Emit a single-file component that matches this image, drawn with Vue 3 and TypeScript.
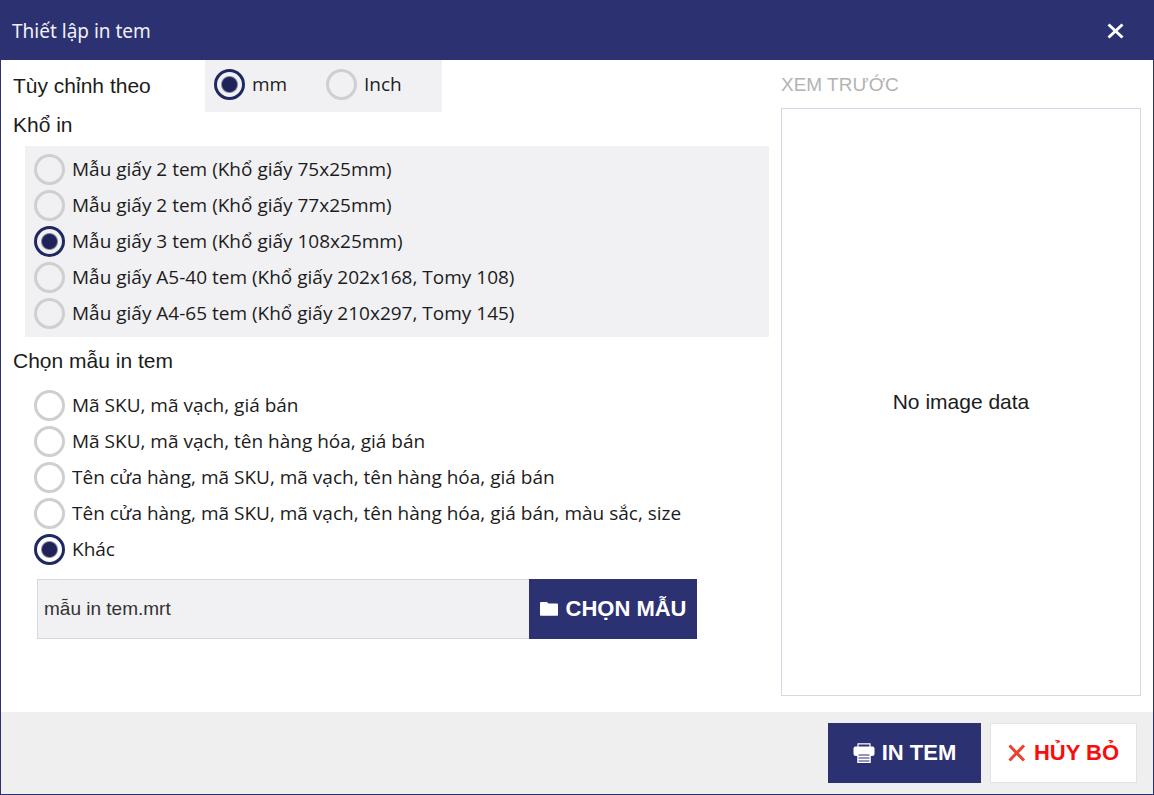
<script setup lang="ts">
import { computed, ref } from 'vue'

type Unit = 'mm' | 'inch'

interface Option {
  id: string
  label: string
}

const units: { id: Unit; label: string }[] = [
  { id: 'mm', label: 'mm' },
  { id: 'inch', label: 'Inch' },
]

const paperSizes: Option[] = [
  { id: 'p75', label: 'Mẫu giấy 2 tem (Khổ giấy 75x25mm)' },
  { id: 'p77', label: 'Mẫu giấy 2 tem (Khổ giấy 77x25mm)' },
  { id: 'p108', label: 'Mẫu giấy 3 tem (Khổ giấy 108x25mm)' },
  { id: 'a5', label: 'Mẫu giấy A5-40 tem (Khổ giấy 202x168, Tomy 108)' },
  { id: 'a4', label: 'Mẫu giấy A4-65 tem (Khổ giấy 210x297, Tomy 145)' },
]

const templates: Option[] = [
  { id: 'basic', label: 'Mã SKU, mã vạch, giá bán' },
  { id: 'name', label: 'Mã SKU, mã vạch, tên hàng hóa, giá bán' },
  { id: 'shop', label: 'Tên cửa hàng, mã SKU, mã vạch, tên hàng hóa, giá bán' },
  { id: 'full', label: 'Tên cửa hàng, mã SKU, mã vạch, tên hàng hóa, giá bán, màu sắc, size' },
  { id: 'other', label: 'Khác' },
]

const unit = ref<Unit>('mm')
const paper = ref('p108')
const template = ref('other')
const fileName = ref('mẫu in tem.mrt')
const canPickFile = computed(() => template.value === 'other')
</script>

<template>
  <div class="dialog" role="dialog" aria-labelledby="dialog-title">
    <header class="titlebar">
      <h1 id="dialog-title">Thiết lập in tem</h1>
      <button class="close" type="button" aria-label="Đóng">
        <svg viewBox="0 0 18 16" width="18" height="16" aria-hidden="true">
          <path d="M1.5 1.5 15.5 14.5M15.5 1.5 1.5 14.5" fill="none" stroke="#fff" stroke-width="3" />
        </svg>
      </button>
    </header>

    <main class="content">
      <form class="settings" @submit.prevent>
        <div class="unit-row">
          <span id="unit-label" class="heading">Tùy chỉnh theo</span>
          <div class="units" role="radiogroup" aria-labelledby="unit-label">
            <label v-for="u in units" :key="u.id" class="option">
              <input v-model="unit" type="radio" name="unit" :value="u.id" />
              <span>{{ u.label }}</span>
            </label>
          </div>
        </div>

        <h2 id="paper-label" class="heading">Khổ in</h2>
        <div class="group shaded" role="radiogroup" aria-labelledby="paper-label">
          <label v-for="p in paperSizes" :key="p.id" class="option">
            <input v-model="paper" type="radio" name="paper" :value="p.id" />
            <span>{{ p.label }}</span>
          </label>
        </div>

        <h2 id="template-label" class="heading template-heading">Chọn mẫu in tem</h2>
        <div class="group" role="radiogroup" aria-labelledby="template-label">
          <label v-for="t in templates" :key="t.id" class="option">
            <input v-model="template" type="radio" name="template" :value="t.id" />
            <span>{{ t.label }}</span>
          </label>
        </div>

        <div class="file-row">
          <input v-model="fileName" class="file" type="text" readonly aria-label="Tệp mẫu in" />
          <button class="btn primary pick" type="button" :disabled="!canPickFile">
            <svg viewBox="0 0 18 14" width="18" height="14" aria-hidden="true">
              <path d="M0 1Q0 0 1 0h6l1.5 1.5H17q1 0 1 1V13q0 .7-.7.7H.7Q0 13.700 0 13z" fill="#fff" />
            </svg>
            <span>CHỌN MẪU</span>
          </button>
        </div>
      </form>

      <section class="preview" aria-labelledby="preview-label">
        <h2 id="preview-label" class="heading muted">XEM TRƯỚC</h2>
        <div class="canvas">No image data</div>
      </section>
    </main>

    <footer class="actions">
      <button class="btn primary print" type="button">
        <svg viewBox="0 0 22 20" width="22" height="20" aria-hidden="true">
          <path d="M5 4V.8h12V4" fill="none" stroke="#fff" stroke-width="1.2" />
          <path d="M2.500 3.500h17q2 0 2 2v5q0 2.500-2.500 2.500H3Q.5 13 .5 10.500v-5q0-2 2-2z" fill="#fff" />
          <path d="M4.200 10.500h13.600V20H4.200z" fill="#fff" />
          <path d="M5.500 12h11M5.500 15h11M5.500 18h11" stroke="#2c3172" stroke-width="1" />
        </svg>
        <span>IN TEM</span>
      </button>
      <button class="btn cancel" type="button">
        <svg viewBox="0 0 18 18" width="18" height="18" aria-hidden="true">
          <path d="M1.500 1.500 16 16.500M16 1.500 1.500 16.500" fill="none" stroke="#e8432f" stroke-width="3" />
        </svg>
        <span>HỦY BỎ</span>
      </button>
    </footer>
  </div>
</template>

<style>
body {
  margin: 0;
}
</style>

<style scoped>
.dialog {
  --navy: #2c3172;
  --line: #d5d5e5;
  --shade: #f1f1f4;
  box-sizing: border-box;
  min-height: 100vh;
  display: flex;
  flex-direction: column;
  border: 1px solid var(--navy);
  background: #fff;
  color: #1c1c1c;
  font-family: "Liberation Sans", Arial, sans-serif;
  font-size: 21px;
}

.titlebar {
  display: flex;
  align-items: center;
  justify-content: space-between;
  height: 59px;
  padding: 0 28px 0 11px;
  background: var(--navy);
}

.titlebar h1 {
  margin: 0;
  color: #f0f0f6;
  font: 400 19px/28px "Noto Sans", "Open Sans", sans-serif;
}

.close {
  display: flex;
  padding: 0;
  border: 0;
  background: none;
}

.content {
  flex: 1;
  display: grid;
  grid-template-columns: minmax(0, 1fr) 360px;
  gap: 12px;
  padding: 0 12px 16px 12px;
}

.heading {
  margin: 0;
  font-size: 21px;
  font-weight: 400;
  line-height: 26px;
}

.unit-row {
  display: grid;
  grid-template-columns: 192px 237px;
  align-items: center;
}

.units {
  display: grid;
  grid-template-columns: 112px 1fr;
  box-sizing: border-box;
  height: 52px;
  padding: 6px 9px 10px;
  background: var(--shade);
}

.group {
  display: flex;
  flex-direction: column;
  margin-left: 12px;
  padding: 5px 9px 6px;
}

.unit-row + .heading {
  margin-bottom: 8px;
}

.shaded {
  background: var(--shade);
}

.template-heading {
  margin: 11px 0 8px;
}

.option {
  display: flex;
  align-items: center;
  gap: 7px;
  height: 36px;
  font: 19px/26px "Open Sans", "Noto Sans", sans-serif;
}

.option input {
  flex: none;
  appearance: none;
  box-sizing: border-box;
  width: 31px;
  height: 31px;
  margin: 0;
  border: 3px solid #cfcfcf;
  border-radius: 50%;
}

.option input:checked {
  border-color: #1f2960;
  background: radial-gradient(circle, #1f2358 7px, transparent 9px);
}

.file-row {
  display: flex;
  height: 60px;
  margin: 6px 72px 0 24px;
}

.file {
  flex: 1;
  min-width: 0;
  box-sizing: border-box;
  padding: 0 6px;
  border: 1px solid var(--line);
  border-right: 0;
  border-radius: 0;
  background: var(--shade);
  color: #333;
  font: 19px "Liberation Sans", Arial, sans-serif;
  outline: 0;
}

.btn {
  display: flex;
  align-items: center;
  justify-content: center;
  box-sizing: border-box;
  height: 60px;
  padding: 0;
  border: 1px solid transparent;
  font: bold 22px "Liberation Sans", Arial, sans-serif;
  white-space: nowrap;
}

.primary {
  border-color: var(--navy);
  background: var(--navy);
  color: #fff;
}

.pick {
  width: 168px;
  gap: 8px;
}

.preview {
  display: flex;
  flex-direction: column;
  padding-top: 12px;
}

.muted {
  color: #b3b3b3;
  font-size: 19px;
}

.canvas {
  flex: 1;
  display: flex;
  align-items: center;
  justify-content: center;
  margin-top: 10px;
  border: 1px solid var(--line);
}

.actions {
  display: flex;
  justify-content: flex-end;
  gap: 9px;
  padding: 11px 16px;
  background: #efefef;
}

.print {
  width: 153px;
  gap: 7px;
}

.cancel {
  width: 147px;
  gap: 8px;
  border-color: #e2e2e2;
  background: #fff;
  color: #f80d0d;
}
</style>
